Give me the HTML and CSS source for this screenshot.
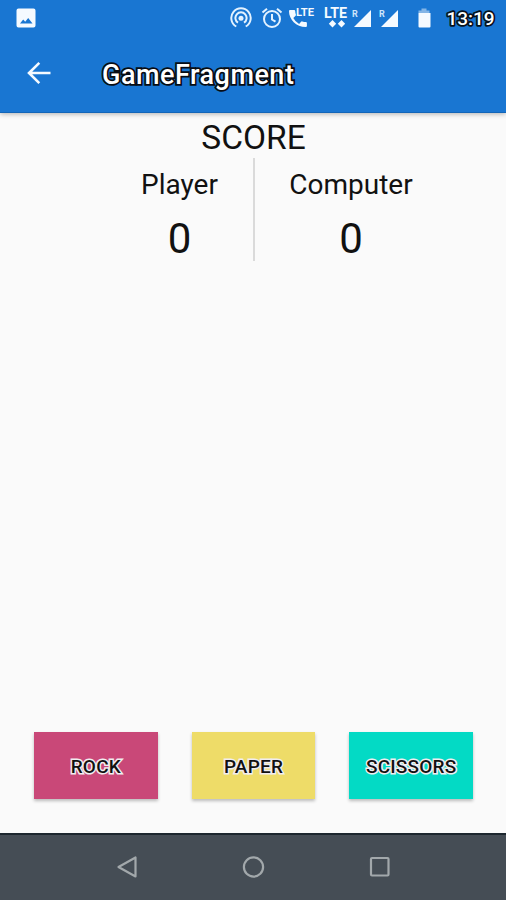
FILE: index.html
```html
<!DOCTYPE html>
<html lang="en">
<head>
<meta charset="utf-8">
<title>GameFragment</title>
<link rel="stylesheet" href="styles.css">
</head>
<body>
<header class="header">
  <div class="status">
    <svg class="photo" width="20" height="20" viewBox="0 0 20 20"><path fill="#f5faff" fill-rule="evenodd" d="M2.500.5h15a2 2 0 0 1 2 2v15a2 2 0 0 1-2 2h-15a2 2 0 0 1-2-2v-15a2 2 0 0 1 2-2zM4 15.500h12.500l-4.300-5.500-3 3.800-2-2.300z"/></svg>
    <svg width="270" height="36" viewBox="0 0 270 36">
      <g fill="none" stroke="#e3f2ff" stroke-width="2">
        <path d="M6.300 26.500A9.700 9.700 0 1 1 15.700 26.500M8 22.700A5.600 5.600 0 1 1 14 22.700"/>
        <circle cx="42" cy="19" r="8"/><path d="M42 14v5.500l3.500 2.200M32.500 12.500l4.500-3.800M47 8.700l4.500 3.800"/>
      </g>
      <circle cx="11" cy="18.200" r="2.500" fill="#e3f2ff"/>
      <path fill="#f5faff" d="M60 10h4.200q.9 0 1 1 .1 2 .7 3.600.2.700-.3 1.200l-2.300 2.300q2 4 5.800 5.800l2-2.200q.5-.5 1.200-.3 1.700.6 3.600.7 1 .1 1 1V26q0 1-1 1C66 27 59 19.500 59 11q0-1 1-1z"/>
      <text class="lte-small" x="66" y="16" textLength="18" lengthAdjust="spacingAndGlyphs">LTE</text>
      <text class="lte" x="94" y="18" textLength="23" lengthAdjust="spacingAndGlyphs">LTE</text>
      <path fill="#f5faff" d="M102.500 20l3.700 3.700-3.700 3.700-3.700-3.700zM111.500 20l3.700 3.700-3.700 3.700-3.700-3.700zM141 10v17h-17zM168 10v17h-17z"/>
      <text class="roaming" x="122" y="17">R</text>
      <text class="roaming" x="149" y="17">R</text>
      <path fill="#84b5e6" d="M188.500 13v-2.500h3v-2h5v2h3V13z"/>
      <path fill="#f5faff" d="M188.500 13h12v13.500q0 1-1 1h-10q-1 0-1-1z"/>
      <text class="clock" x="216.500" y="24.500" textLength="48">13:19</text>
    </svg>
  </div>
  <div class="toolbar">
    <svg width="24" height="24" viewBox="0 0 24 24" fill="none" stroke="#f5faff" stroke-width="2.600"><path d="M23.500 12H3M12.300 1.800L2 12l10.300 10.200"/></svg>
    <h1 class="title">GameFragment</h1>
  </div>
</header>
<main class="game">
  <h2 class="heading">SCORE</h2>
  <section class="scores">
    <div class="side player"><span class="name">Player</span><span class="points">0</span></div>
    <div class="divider"></div>
    <div class="side computer"><span class="name">Computer</span><span class="points">0</span></div>
  </section>
  <div class="choices">
    <button class="choice rock">ROCK</button>
    <button class="choice paper">PAPER</button>
    <button class="choice scissors">SCISSORS</button>
  </div>
</main>
<nav class="nav">
  <svg width="24" height="24" viewBox="0 0 24 24"><path d="M20.500 2.500v19L3.500 12z"/></svg>
  <svg width="24" height="24" viewBox="0 0 24 24"><circle cx="11.500" cy="12" r="9.600"/></svg>
  <svg width="24" height="24" viewBox="0 0 24 24"><rect x="3" y="3" width="17.500" height="17.500" rx="1"/></svg>
</nav>
</body>
</html>
```
FILE: styles.css
```css
* { box-sizing: border-box; }
body {
  margin: 0;
  width: 506px;
  height: 900px;
  display: flex;
  flex-direction: column;
  overflow: hidden;
  background: #fafafa;
  color: #111;
  font-family: Roboto, sans-serif;
}
.header {
  height: 113px;
  flex: none;
  background: #1976d2;
  border-bottom: 1px solid #1265b8;
  box-shadow: 0 1px 5px rgba(0, 0, 0, .3);
}
.status {
  height: 36px;
  display: flex;
  justify-content: space-between;
  padding: 0 6px 0 16px;
}
.status .photo { margin-top: 8px; }
.status text { fill: #f5faff; font-weight: 700; }
.status .lte-small { font-size: 10.500px; }
.status .lte { font-size: 14px; }
.status .roaming { font-size: 9px; fill: #cde5fb; }
.status .clock {
  font-size: 19px;
  font-weight: 500;
  fill: #fff;
  stroke: #07111c;
  stroke-width: 3.500px;
  stroke-linejoin: round;
  paint-order: stroke;
}
.toolbar {
  height: 76px;
  display: flex;
  align-items: center;
  padding: 0 0 2px 27px;
}
.title {
  margin: 4px 0 0 51px;
  font-size: 27px;
  font-weight: 500;
  line-height: 32px;
  letter-spacing: .5px;
  color: #fff;
  -webkit-text-stroke: 3.500px #080d14;
  paint-order: stroke fill;
}
.game {
  flex: 1;
  display: flex;
  flex-direction: column;
}
.heading {
  margin: 5px 0 0 1px;
  text-align: center;
  font-size: 33.500px;
  font-weight: 400;
  line-height: 40px;
}
.scores {
  height: 103px;
  padding-right: 58px;
  display: flex;
  justify-content: flex-end;
}
.side {
  display: flex;
  flex-direction: column;
  align-items: center;
  width: 147px;
}
.computer { width: 192px; margin-right: 1px; }
.divider { width: 2px; background: #dadada; }
.name { font-size: 28px; line-height: 34px; margin-top: 10px; }
.points { font-size: 42px; line-height: 50px; margin-top: 12px; }
.choices {
  display: flex;
  gap: 34px;
  margin: auto 33px 34px 34px;
}
.choice {
  flex: 1;
  height: 67px;
  border: 0;
  padding: 2px 0 0;
  font: 500 19px/24px Roboto, sans-serif;
  letter-spacing: .2px;
  color: #111;
  -webkit-text-stroke: 3px #f1edf0;
  paint-order: stroke fill;
  box-shadow: 0 2px 3px rgba(0, 0, 0, .25);
}
.rock { background: #c94878; }
.paper { background: #eedc68; }
.scissors { background: #03dac5; }
.nav {
  height: 67px;
  flex: none;
  display: flex;
  align-items: center;
  justify-content: center;
  gap: 102.500px;
  padding: 0 0 2px 1px;
  border-top: 2px solid #1d272f;
  background: #454d55;
}
.nav svg { fill: none; stroke: #a2a8ab; stroke-width: 2.200; stroke-linejoin: round; }
```
